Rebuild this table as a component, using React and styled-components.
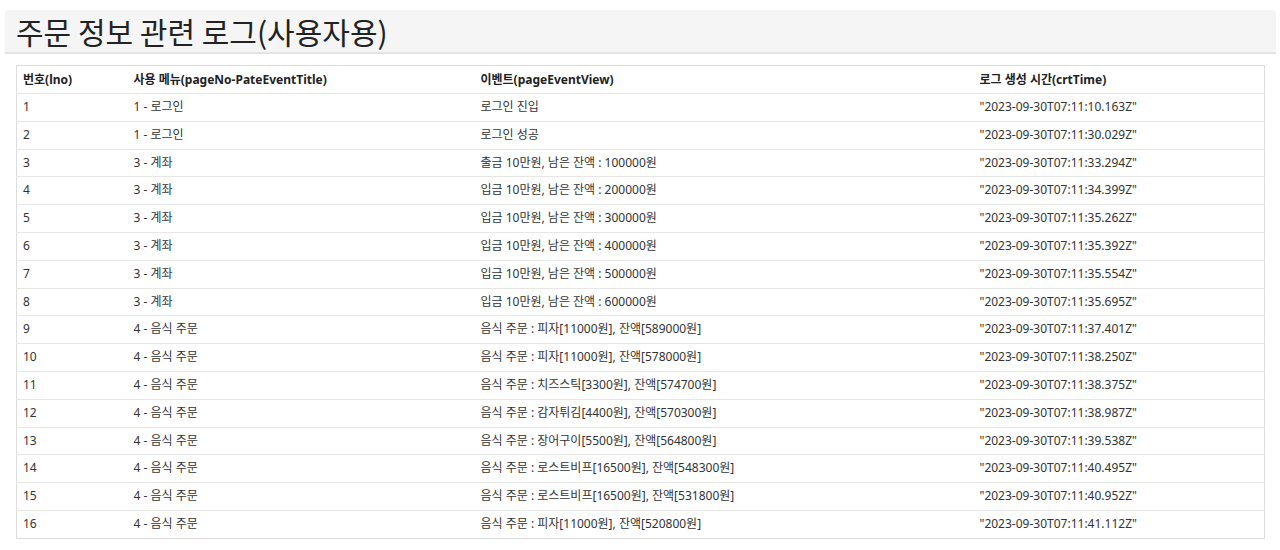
import React from "react"
import styled, { createGlobalStyle } from "styled-components"

const GlobalStyle = createGlobalStyle`
  body {
    margin: 0;
    background: #fff;
    color: #333;
    font-family: "Noto Sans", "Noto Sans CJK KR", sans-serif;
  }
`

const Page = styled.div`
  padding: 10px 4px 0 5px;
`

const TitleBar = styled.div`
  height: 42px;
  background: #f5f5f5;
  border-bottom: 2px solid #e3e3e3;
  border-radius: 3px 3px 0 0;
  display: flex;
  align-items: center;
  padding-left: 11px;
`

const Title = styled.h1`
  margin: 0;
  font-family: "Noto Sans CJK KR", sans-serif;
  font-weight: 400;
  font-size: 30px;
  line-height: 1;
  color: #222;
`

const Table = styled.table`
  margin: 11px 0 0 11px;
  width: 1248px;
  table-layout: fixed;
  border-collapse: collapse;
  border: 1px solid #ddd;
  font-size: 12px;
  font-family: "Noto Sans", "Noto Sans CJK KR", sans-serif;
`

const Th = styled.th`
  box-sizing: border-box;
  text-align: left;
  font-weight: 700;
  color: #222;
  padding: 5px 6px;
  line-height: 17px;
  width: ${(p) => p.w}px;
`

const Td = styled.td`
  padding: 5px 6px;
  line-height: 16.8px;
  color: #333;
  border-top: 1px solid #e6e6e6;
  white-space: nowrap;
`

const rows = [
  ["1 - 로그인", "로그인 진입", "10.163"],
  ["1 - 로그인", "로그인 성공", "30.029"],
  ["3 - 계좌", "출금 10만원, 남은 잔액 : 100000원", "33.294"],
  ["3 - 계좌", "입금 10만원, 남은 잔액 : 200000원", "34.399"],
  ["3 - 계좌", "입금 10만원, 남은 잔액 : 300000원", "35.262"],
  ["3 - 계좌", "입금 10만원, 남은 잔액 : 400000원", "35.392"],
  ["3 - 계좌", "입금 10만원, 남은 잔액 : 500000원", "35.554"],
  ["3 - 계좌", "입금 10만원, 남은 잔액 : 600000원", "35.695"],
  ["4 - 음식 주문", "음식 주문 : 피자[11000원], 잔액[589000원]", "37.401"],
  ["4 - 음식 주문", "음식 주문 : 피자[11000원], 잔액[578000원]", "38.250"],
  ["4 - 음식 주문", "음식 주문 : 치즈스틱[3300원], 잔액[574700원]", "38.375"],
  ["4 - 음식 주문", "음식 주문 : 감자튀김[4400원], 잔액[570300원]", "38.987"],
  ["4 - 음식 주문", "음식 주문 : 장어구이[5500원], 잔액[564800원]", "39.538"],
  ["4 - 음식 주문", "음식 주문 : 로스트비프[16500원], 잔액[548300원]", "40.495"],
  ["4 - 음식 주문", "음식 주문 : 로스트비프[16500원], 잔액[531800원]", "40.952"],
  ["4 - 음식 주문", "음식 주문 : 피자[11000원], 잔액[520800원]", "41.112"],
]

const App = () => (
  <Page>
    <GlobalStyle />
    <TitleBar>
      <Title>주문 정보 관련 로그(사용자용)</Title>
    </TitleBar>
    <Table>
      <thead>
        <tr>
          <Th w={111}>번호(lno)</Th>
          <Th w={347}>사용 메뉴(pageNo-PateEventTitle)</Th>
          <Th w={499}>이벤트(pageEventView)</Th>
          <Th w={291}>로그 생성 시간(crtTime)</Th>
        </tr>
      </thead>
      <tbody>
        {rows.map(([menu, event, sec], i) => (
          <tr key={i}>
            <Td>{i + 1}</Td>
            <Td>{menu}</Td>
            <Td>{event}</Td>
            <Td>"2023-09-30T07:11:{sec}Z"</Td>
          </tr>
        ))}
      </tbody>
    </Table>
  </Page>
)

export default App
